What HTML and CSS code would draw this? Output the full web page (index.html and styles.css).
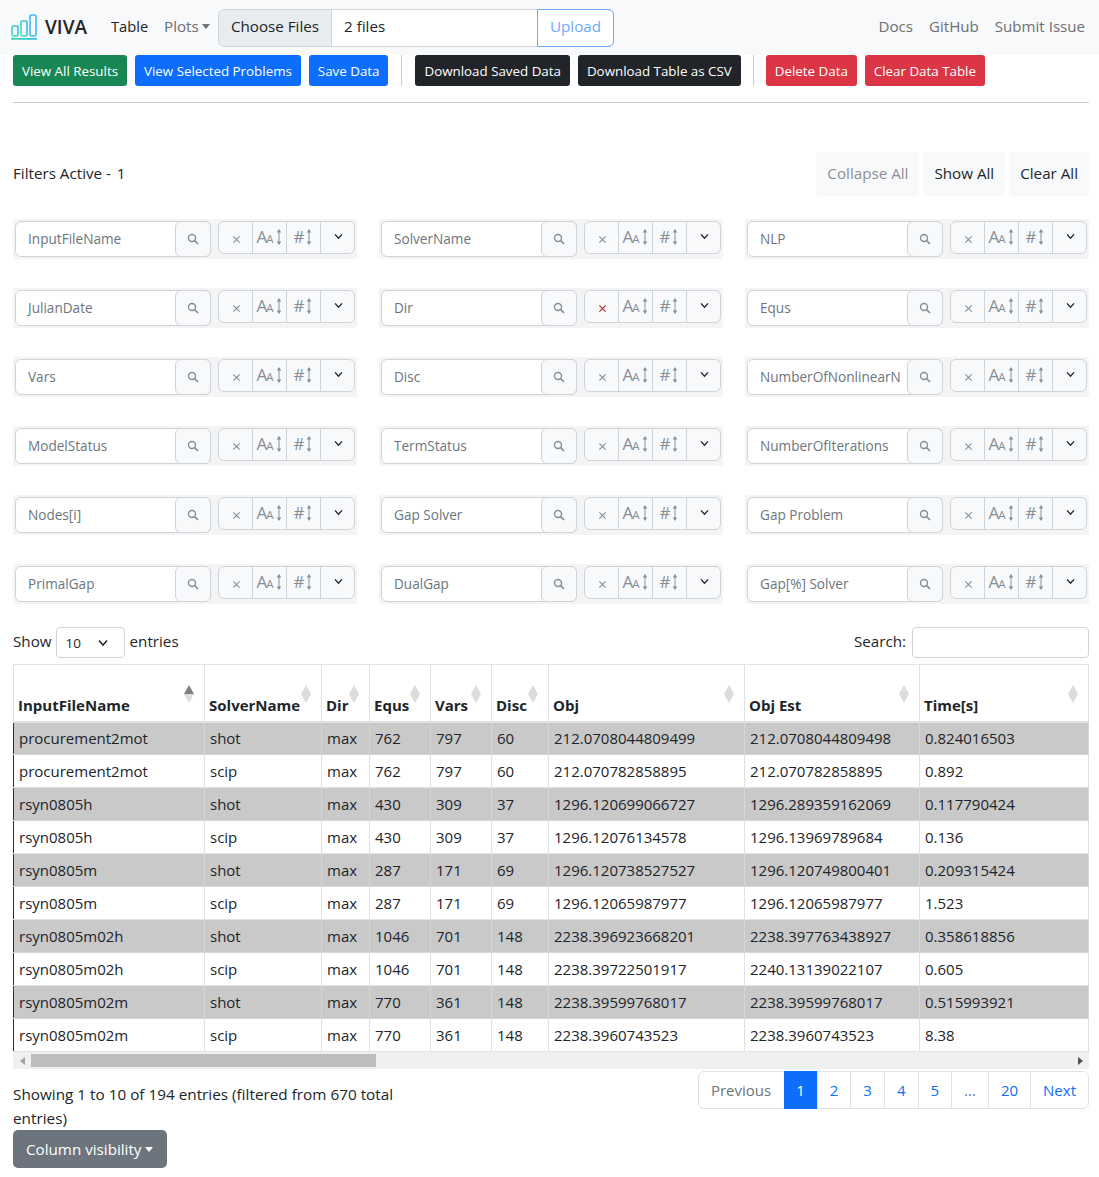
FILE: index.html
```html
<!DOCTYPE html>
<html lang="en">
<head>
    <meta charset="UTF-8">
    <meta name="viewport" content="width=device-width, initial-scale=1.0">
    <title>VIVA</title>
    <link rel="stylesheet" href="styles.css">
</head>
<body>
    <svg class="defs" width="0" height="0">
        <symbol id="i-search" viewBox="0 0 12 12"><circle cx="5" cy="5" r="3.5" fill="none" stroke="currentColor" stroke-width="1.4"/><path d="M7.6 7.6 L11 11" stroke="currentColor" stroke-width="1.7"/></symbol>
        <symbol id="i-x" viewBox="0 0 10 10"><path d="M1.5 1.5 L8.5 8.5 M8.5 1.5 L1.5 8.5" stroke="currentColor" stroke-width="1.2" fill="none"/></symbol>
        <symbol id="i-arrows" viewBox="0 0 8 20"><path d="M4 3 V17" stroke="currentColor" stroke-width="1.1"/><path d="M1.5 5 L4 1 L6.5 5 Z M1.5 15 L4 19 L6.5 15 Z" fill="currentColor"/></symbol>
        <symbol id="i-chev" viewBox="0 0 10 8"><path d="M1 1.5 L5 6 L9 1.5" stroke="currentColor" stroke-width="1.5" fill="none"/></symbol>
    </svg>

    <nav class="navbar">
        <div class="brand">
            <svg class="logo" width="28" height="28" viewBox="0 0 28 28">
                <defs><linearGradient id="lg" x1="0" y1="1" x2="1" y2="0"><stop offset="0" stop-color="#3ee8a8"/><stop offset="1" stop-color="#35b0f5"/></linearGradient></defs>
                <rect x="2" y="13" width="6" height="10" rx="1.5" fill="none" stroke="url(#lg)" stroke-width="1.6"/>
                <rect x="11" y="8" width="6" height="15" rx="1.5" fill="none" stroke="url(#lg)" stroke-width="1.6"/>
                <rect x="20" y="2" width="6" height="21" rx="1.5" fill="none" stroke="#45b5f5" stroke-width="1.6"/>
                <rect x="1" y="25" width="26" height="1.8" fill="url(#lg)"/>
            </svg>
            <span class="brand-name">VIVA</span>
        </div>
        <a class="nav-link nav-active">Table</a>
        <a class="nav-link nav-plots">Plots<span class="caret"></span></a>
        <div class="file-group">
            <span class="file-choose">Choose Files</span>
            <span class="file-name">2 files</span>
            <span class="file-upload">Upload</span>
        </div>
        <div class="nav-right">
            <a class="nav-link">Docs</a>
            <a class="nav-link">GitHub</a>
            <a class="nav-link">Submit Issue</a>
        </div>
    </nav>

    <main class="page">
        <div class="toolbar">
            <button class="btn btn-green">View All Results</button>
            <button class="btn btn-blue">View Selected Problems</button>
            <button class="btn btn-blue">Save Data</button>
            <span class="vr"></span>
            <button class="btn btn-dark">Download Saved Data</button>
            <button class="btn btn-dark">Download Table as CSV</button>
            <span class="vr vr-tight"></span>
            <button class="btn btn-red">Delete Data</button>
            <button class="btn btn-red">Clear Data Table</button>
        </div>
        <hr class="rule">

        <div class="filter-head">
            <div class="filter-count">Filters Active - <span class="count">1</span></div>
            <div class="filter-actions">
                <span class="light-btn light-off">Collapse All</span>
                <span class="light-btn">Show All</span>
                <span class="light-btn">Clear All</span>
            </div>
        </div>

        <div class="filters">
            <div class="filter"><div class="search"><span class="search-input">InputFileName</span><span class="search-btn"><svg width="12" height="12"><use href="#i-search"/></svg></span></div><div class="tools"><span class="tool"><svg width="9" height="9"><use href="#i-x"/></svg></span><span class="tool tool-sort">A<small>A</small><svg width="8" height="18"><use href="#i-arrows"/></svg></span><span class="tool tool-sort">#<svg width="8" height="18"><use href="#i-arrows"/></svg></span><span class="tool tool-chev"><svg width="9" height="7"><use href="#i-chev"/></svg></span></div></div>
            <div class="filter"><div class="search"><span class="search-input">SolverName</span><span class="search-btn"><svg width="12" height="12"><use href="#i-search"/></svg></span></div><div class="tools"><span class="tool"><svg width="9" height="9"><use href="#i-x"/></svg></span><span class="tool tool-sort">A<small>A</small><svg width="8" height="18"><use href="#i-arrows"/></svg></span><span class="tool tool-sort">#<svg width="8" height="18"><use href="#i-arrows"/></svg></span><span class="tool tool-chev"><svg width="9" height="7"><use href="#i-chev"/></svg></span></div></div>
            <div class="filter"><div class="search"><span class="search-input">NLP</span><span class="search-btn"><svg width="12" height="12"><use href="#i-search"/></svg></span></div><div class="tools"><span class="tool"><svg width="9" height="9"><use href="#i-x"/></svg></span><span class="tool tool-sort">A<small>A</small><svg width="8" height="18"><use href="#i-arrows"/></svg></span><span class="tool tool-sort">#<svg width="8" height="18"><use href="#i-arrows"/></svg></span><span class="tool tool-chev"><svg width="9" height="7"><use href="#i-chev"/></svg></span></div></div>
            <div class="filter"><div class="search"><span class="search-input">JulianDate</span><span class="search-btn"><svg width="12" height="12"><use href="#i-search"/></svg></span></div><div class="tools"><span class="tool"><svg width="9" height="9"><use href="#i-x"/></svg></span><span class="tool tool-sort">A<small>A</small><svg width="8" height="18"><use href="#i-arrows"/></svg></span><span class="tool tool-sort">#<svg width="8" height="18"><use href="#i-arrows"/></svg></span><span class="tool tool-chev"><svg width="9" height="7"><use href="#i-chev"/></svg></span></div></div>
            <div class="filter"><div class="search"><span class="search-input">Dir</span><span class="search-btn"><svg width="12" height="12"><use href="#i-search"/></svg></span></div><div class="tools"><span class="tool tool-on"><svg width="9" height="9"><use href="#i-x"/></svg></span><span class="tool tool-sort">A<small>A</small><svg width="8" height="18"><use href="#i-arrows"/></svg></span><span class="tool tool-sort">#<svg width="8" height="18"><use href="#i-arrows"/></svg></span><span class="tool tool-chev"><svg width="9" height="7"><use href="#i-chev"/></svg></span></div></div>
            <div class="filter"><div class="search"><span class="search-input">Equs</span><span class="search-btn"><svg width="12" height="12"><use href="#i-search"/></svg></span></div><div class="tools"><span class="tool"><svg width="9" height="9"><use href="#i-x"/></svg></span><span class="tool tool-sort">A<small>A</small><svg width="8" height="18"><use href="#i-arrows"/></svg></span><span class="tool tool-sort">#<svg width="8" height="18"><use href="#i-arrows"/></svg></span><span class="tool tool-chev"><svg width="9" height="7"><use href="#i-chev"/></svg></span></div></div>
            <div class="filter"><div class="search"><span class="search-input">Vars</span><span class="search-btn"><svg width="12" height="12"><use href="#i-search"/></svg></span></div><div class="tools"><span class="tool"><svg width="9" height="9"><use href="#i-x"/></svg></span><span class="tool tool-sort">A<small>A</small><svg width="8" height="18"><use href="#i-arrows"/></svg></span><span class="tool tool-sort">#<svg width="8" height="18"><use href="#i-arrows"/></svg></span><span class="tool tool-chev"><svg width="9" height="7"><use href="#i-chev"/></svg></span></div></div>
            <div class="filter"><div class="search"><span class="search-input">Disc</span><span class="search-btn"><svg width="12" height="12"><use href="#i-search"/></svg></span></div><div class="tools"><span class="tool"><svg width="9" height="9"><use href="#i-x"/></svg></span><span class="tool tool-sort">A<small>A</small><svg width="8" height="18"><use href="#i-arrows"/></svg></span><span class="tool tool-sort">#<svg width="8" height="18"><use href="#i-arrows"/></svg></span><span class="tool tool-chev"><svg width="9" height="7"><use href="#i-chev"/></svg></span></div></div>
            <div class="filter"><div class="search"><span class="search-input">NumberOfNonlinearN</span><span class="search-btn"><svg width="12" height="12"><use href="#i-search"/></svg></span></div><div class="tools"><span class="tool"><svg width="9" height="9"><use href="#i-x"/></svg></span><span class="tool tool-sort">A<small>A</small><svg width="8" height="18"><use href="#i-arrows"/></svg></span><span class="tool tool-sort">#<svg width="8" height="18"><use href="#i-arrows"/></svg></span><span class="tool tool-chev"><svg width="9" height="7"><use href="#i-chev"/></svg></span></div></div>
            <div class="filter"><div class="search"><span class="search-input">ModelStatus</span><span class="search-btn"><svg width="12" height="12"><use href="#i-search"/></svg></span></div><div class="tools"><span class="tool"><svg width="9" height="9"><use href="#i-x"/></svg></span><span class="tool tool-sort">A<small>A</small><svg width="8" height="18"><use href="#i-arrows"/></svg></span><span class="tool tool-sort">#<svg width="8" height="18"><use href="#i-arrows"/></svg></span><span class="tool tool-chev"><svg width="9" height="7"><use href="#i-chev"/></svg></span></div></div>
            <div class="filter"><div class="search"><span class="search-input">TermStatus</span><span class="search-btn"><svg width="12" height="12"><use href="#i-search"/></svg></span></div><div class="tools"><span class="tool"><svg width="9" height="9"><use href="#i-x"/></svg></span><span class="tool tool-sort">A<small>A</small><svg width="8" height="18"><use href="#i-arrows"/></svg></span><span class="tool tool-sort">#<svg width="8" height="18"><use href="#i-arrows"/></svg></span><span class="tool tool-chev"><svg width="9" height="7"><use href="#i-chev"/></svg></span></div></div>
            <div class="filter"><div class="search"><span class="search-input">NumberOfIterations</span><span class="search-btn"><svg width="12" height="12"><use href="#i-search"/></svg></span></div><div class="tools"><span class="tool"><svg width="9" height="9"><use href="#i-x"/></svg></span><span class="tool tool-sort">A<small>A</small><svg width="8" height="18"><use href="#i-arrows"/></svg></span><span class="tool tool-sort">#<svg width="8" height="18"><use href="#i-arrows"/></svg></span><span class="tool tool-chev"><svg width="9" height="7"><use href="#i-chev"/></svg></span></div></div>
            <div class="filter"><div class="search"><span class="search-input">Nodes[i]</span><span class="search-btn"><svg width="12" height="12"><use href="#i-search"/></svg></span></div><div class="tools"><span class="tool"><svg width="9" height="9"><use href="#i-x"/></svg></span><span class="tool tool-sort">A<small>A</small><svg width="8" height="18"><use href="#i-arrows"/></svg></span><span class="tool tool-sort">#<svg width="8" height="18"><use href="#i-arrows"/></svg></span><span class="tool tool-chev"><svg width="9" height="7"><use href="#i-chev"/></svg></span></div></div>
            <div class="filter"><div class="search"><span class="search-input">Gap Solver</span><span class="search-btn"><svg width="12" height="12"><use href="#i-search"/></svg></span></div><div class="tools"><span class="tool"><svg width="9" height="9"><use href="#i-x"/></svg></span><span class="tool tool-sort">A<small>A</small><svg width="8" height="18"><use href="#i-arrows"/></svg></span><span class="tool tool-sort">#<svg width="8" height="18"><use href="#i-arrows"/></svg></span><span class="tool tool-chev"><svg width="9" height="7"><use href="#i-chev"/></svg></span></div></div>
            <div class="filter"><div class="search"><span class="search-input">Gap Problem</span><span class="search-btn"><svg width="12" height="12"><use href="#i-search"/></svg></span></div><div class="tools"><span class="tool"><svg width="9" height="9"><use href="#i-x"/></svg></span><span class="tool tool-sort">A<small>A</small><svg width="8" height="18"><use href="#i-arrows"/></svg></span><span class="tool tool-sort">#<svg width="8" height="18"><use href="#i-arrows"/></svg></span><span class="tool tool-chev"><svg width="9" height="7"><use href="#i-chev"/></svg></span></div></div>
            <div class="filter"><div class="search"><span class="search-input">PrimalGap</span><span class="search-btn"><svg width="12" height="12"><use href="#i-search"/></svg></span></div><div class="tools"><span class="tool"><svg width="9" height="9"><use href="#i-x"/></svg></span><span class="tool tool-sort">A<small>A</small><svg width="8" height="18"><use href="#i-arrows"/></svg></span><span class="tool tool-sort">#<svg width="8" height="18"><use href="#i-arrows"/></svg></span><span class="tool tool-chev"><svg width="9" height="7"><use href="#i-chev"/></svg></span></div></div>
            <div class="filter"><div class="search"><span class="search-input">DualGap</span><span class="search-btn"><svg width="12" height="12"><use href="#i-search"/></svg></span></div><div class="tools"><span class="tool"><svg width="9" height="9"><use href="#i-x"/></svg></span><span class="tool tool-sort">A<small>A</small><svg width="8" height="18"><use href="#i-arrows"/></svg></span><span class="tool tool-sort">#<svg width="8" height="18"><use href="#i-arrows"/></svg></span><span class="tool tool-chev"><svg width="9" height="7"><use href="#i-chev"/></svg></span></div></div>
            <div class="filter"><div class="search"><span class="search-input">Gap[%] Solver</span><span class="search-btn"><svg width="12" height="12"><use href="#i-search"/></svg></span></div><div class="tools"><span class="tool"><svg width="9" height="9"><use href="#i-x"/></svg></span><span class="tool tool-sort">A<small>A</small><svg width="8" height="18"><use href="#i-arrows"/></svg></span><span class="tool tool-sort">#<svg width="8" height="18"><use href="#i-arrows"/></svg></span><span class="tool tool-chev"><svg width="9" height="7"><use href="#i-chev"/></svg></span></div></div>
        </div>

        <div class="table-head">
            <div class="length"><span class="head-text">Show</span><span class="length-select">10<svg width="12" height="8"><use href="#i-chev"/></svg></span><span class="head-text">entries</span></div>
            <div class="table-search"><span class="head-text">Search:</span><span class="search-box"></span></div>
        </div>

        <table class="results">
            <colgroup>
                <col class="c-file"><col class="c-solver"><col class="c-dir"><col class="c-num"><col class="c-num"><col class="c-disc"><col class="c-obj"><col class="c-est"><col class="c-time">
            </colgroup>
            <thead>
                <tr>
                    <th class="sorted">InputFileName</th><th>SolverName</th><th>Dir</th><th>Equs</th><th>Vars</th><th>Disc</th><th>Obj</th><th>Obj Est</th><th>Time[s]</th>
                </tr>
            </thead>
            <tbody>
                <tr class="odd"><td>procurement2mot</td><td>shot</td><td>max</td><td>762</td><td>797</td><td>60</td><td>212.0708044809499</td><td>212.0708044809498</td><td>0.824016503</td></tr>
                <tr><td>procurement2mot</td><td>scip</td><td>max</td><td>762</td><td>797</td><td>60</td><td>212.070782858895</td><td>212.070782858895</td><td>0.892</td></tr>
                <tr class="odd"><td>rsyn0805h</td><td>shot</td><td>max</td><td>430</td><td>309</td><td>37</td><td>1296.120699066727</td><td>1296.289359162069</td><td>0.117790424</td></tr>
                <tr><td>rsyn0805h</td><td>scip</td><td>max</td><td>430</td><td>309</td><td>37</td><td>1296.12076134578</td><td>1296.13969789684</td><td>0.136</td></tr>
                <tr class="odd"><td>rsyn0805m</td><td>shot</td><td>max</td><td>287</td><td>171</td><td>69</td><td>1296.120738527527</td><td>1296.120749800401</td><td>0.209315424</td></tr>
                <tr><td>rsyn0805m</td><td>scip</td><td>max</td><td>287</td><td>171</td><td>69</td><td>1296.12065987977</td><td>1296.12065987977</td><td>1.523</td></tr>
                <tr class="odd"><td>rsyn0805m02h</td><td>shot</td><td>max</td><td>1046</td><td>701</td><td>148</td><td>2238.396923668201</td><td>2238.397763438927</td><td>0.358618856</td></tr>
                <tr><td>rsyn0805m02h</td><td>scip</td><td>max</td><td>1046</td><td>701</td><td>148</td><td>2238.39722501917</td><td>2240.13139022107</td><td>0.605</td></tr>
                <tr class="odd"><td>rsyn0805m02m</td><td>shot</td><td>max</td><td>770</td><td>361</td><td>148</td><td>2238.39599768017</td><td>2238.39599768017</td><td>0.515993921</td></tr>
                <tr><td>rsyn0805m02m</td><td>scip</td><td>max</td><td>770</td><td>361</td><td>148</td><td>2238.3960743523</td><td>2238.3960743523</td><td>8.38</td></tr>
            </tbody>
        </table>
        <div class="scrollbar">
            <span class="arrow-left"></span>
            <span class="thumb"></span>
            <span class="arrow-right"></span>
        </div>

        <div class="table-foot">
            <div class="info">Showing 1 to 10 of 194 entries (filtered from 670 total entries)</div>
            <div class="pager">
                <span class="page-item page-off">Previous</span>
                <span class="page-item page-on">1</span>
                <span class="page-item">2</span>
                <span class="page-item">3</span>
                <span class="page-item">4</span>
                <span class="page-item">5</span>
                <span class="page-item page-off">...</span>
                <span class="page-item">20</span>
                <span class="page-item">Next</span>
            </div>
        </div>
        <button class="btn-columns">Column visibility<span class="caret"></span></button>
    </main>
</body>
</html>
```

FILE: styles.css
```css
* {
    box-sizing: border-box;
}
body {
    margin: 0;
    font-family: "Open Sans", "Noto Sans", Arial, sans-serif;
    font-size: 15.2px;
    line-height: 24px;
    color: #212529;
    background-color: #fff;
}
.defs {
    position: absolute;
}

/* navbar */
.navbar {
    display: flex;
    align-items: center;
    height: 55px;
    padding: 0 14px 0 10px;
    background-color: #f8f9fa;
}
.brand {
    display: flex;
    align-items: center;
    width: 101px;
    margin-top: -1px;
}
.logo {
    margin-right: 7px;
}
.brand-name {
    font-size: 19px;
    font-weight: 600;
}
.nav-link {
    margin-bottom: 4px;
    color: #6c6f73;
}
.nav-right .nav-link {
    margin-bottom: 0;
}
.nav-active {
    width: 53px;
    font-size: 14.7px;
    color: #212529;
}
.nav-plots {
    width: 54px;
}
.caret {
    display: inline-block;
    margin-left: 3px;
    vertical-align: 3px;
    border-top: 5px solid;
    border-left: 4.5px solid transparent;
    border-right: 4.5px solid transparent;
}
.file-group {
    display: flex;
    width: 396px;
    height: 38px;
    line-height: 33px;
    border: 1px solid #ced4da;
    border-radius: 6px;
}
.file-choose {
    width: 113px;
    text-align: center;
    background-color: #e9ecef;
    border-right: 1px solid #ced4da;
    border-radius: 5px 0 0 5px;
}
.file-name {
    flex: 1;
    padding-left: 12px;
    background-color: #fff;
}
.file-upload {
    width: 77px;
    margin: -1px;
    line-height: 33px;
    text-align: center;
    color: #6ea8fe;
    background-color: #fff;
    border: 1px solid #6ea8fe;
    border-radius: 0 6px 6px 0;
}
.nav-right {
    display: flex;
    gap: 16px;
    margin-left: auto;
    margin-bottom: 4px;
    font-size: 15.1px;
}

/* toolbar */
.page {
    padding: 0 10px 0 13px;
}
.toolbar {
    display: flex;
    gap: 8px;
}
.btn {
    height: 31px;
    padding: 0 9px;
    font-family: inherit;
    font-size: 13.35px;
    color: #fff;
    border: none;
    border-radius: 3px;
}
.btn-green {
    background-color: #198754;
}
.btn-blue {
    background-color: #0d6efd;
}
.btn-dark {
    background-color: #212529;
}
.btn-red {
    background-color: #dc3545;
}
.vr {
    width: 1px;
    margin: 0 5px;
    background-color: #ccc;
}
.vr-tight {
    margin: 0 4px;
}
.rule {
    height: 1px;
    margin: 16px 0 0;
    border: none;
    background-color: #c9c9c9;
}

/* filters */
.filter-head {
    display: flex;
    justify-content: space-between;
    align-items: center;
    margin-top: 49px;
    height: 44px;
}
.filter-count {
    margin-bottom: 2px;
}
.count {
    margin-left: 2px;
}
.filter-actions {
    display: flex;
    gap: 4px;
}
.light-btn {
    height: 44px;
    padding: 0 11px;
    line-height: 42px;
    background-color: #f8f9fa;
    border-radius: 4px;
}
.light-off {
    color: #8b9096;
}
.filters {
    display: grid;
    grid-template-columns: repeat(3, 344px);
    column-gap: 22px;
    row-gap: 29px;
    margin-top: 23px;
}
.filter {
    display: flex;
    justify-content: space-between;
    height: 40px;
    padding: 2px;
    background-color: #f4f4f4;
    border-radius: 2px;
}
.search {
    display: flex;
    width: 196px;
    height: 36px;
    line-height: 34px;
    font-size: 13.6px;
    background-color: #fff;
    border: 1px solid #ced4da;
    border-radius: 6px;
}
.search-input {
    flex: 1;
    padding-left: 12px;
    color: #6c757d;
    white-space: nowrap;
    overflow: hidden;
}
.search-btn {
    display: flex;
    align-items: center;
    justify-content: center;
    width: 36px;
    margin: -1px;
    color: #868e96;
    background-color: #f8f9fa;
    border: 1px solid #ced4da;
    border-radius: 6px;
}
.tools {
    display: flex;
    width: 137px;
    height: 33px;
    background-color: #f8f9fa;
    border: 1px solid #ced4da;
    border-radius: 6px;
}
.tool {
    display: flex;
    flex: 1 1 0;
    align-items: center;
    justify-content: center;
    color: #868e96;
    border-left: 1px solid #ced4da;
}
.tool:first-child {
    border-left: none;
}
.tool svg {
    margin-top: 3px;
}
.tool:first-child svg {
    margin-left: 2px;
}
.tool-sort {
    display: block;
    line-height: 30px;
    text-align: center;
    font-size: 17px;
    letter-spacing: -1px;
}
.tool-sort small {
    font-size: 11.5px;
}
.tool-sort svg {
    margin-top: 0;
    margin-left: 2px;
    vertical-align: -3px;
}
.tool-chev {
    color: #212529;
}
.tool-chev svg {
    margin-top: -3px;
    margin-left: 1px;
}
.tool-on {
    color: #c01f1f;
}

/* table */
.table-head {
    display: flex;
    justify-content: space-between;
    height: 31px;
    margin-top: 23px;
}
.length,
.table-search {
    display: flex;
    align-items: center;
}
.head-text {
    margin-bottom: 3px;
}
.length-select {
    display: flex;
    align-items: center;
    justify-content: space-between;
    width: 69px;
    height: 31px;
    margin: 0 5px 0 4px;
    padding: 0 15px 0 9px;
    font-size: 13.5px;
    border: 1px solid #ced4da;
    border-radius: 4px;
}
.table-search {
    gap: 6px;
}
.search-box {
    width: 177px;
    height: 31px;
    border: 1px solid #ced4da;
    border-radius: 4px;
}
.results {
    width: 1076px;
    margin-top: 6px;
    border-collapse: collapse;
    table-layout: fixed;
    white-space: nowrap;
    font-size: 15px;
}
.c-file {
    width: 191px;
}
.c-solver {
    width: 117px;
}
.c-dir {
    width: 48px;
}
.c-num {
    width: 61px;
}
.c-disc {
    width: 57px;
}
.c-obj {
    width: 196px;
}
.c-est {
    width: 175px;
}
.c-time {
    width: 169px;
}
.results th {
    position: relative;
    height: 57px;
    padding: 0 4px 4px;
    text-align: left;
    vertical-align: bottom;
    font-weight: 700;
    border: 1px solid #dee2e6;
    border-bottom-width: 2px;
}
.results th::after {
    content: "";
    position: absolute;
    top: 20px;
    right: 10px;
    width: 10px;
    height: 18px;
    background-color: #dcdcdc;
    clip-path: polygon(50% 0, 100% 50%, 50% 100%, 0 50%);
}
.results th.sorted::after {
    top: 20px;
    height: 9px;
    background-color: #808080;
    clip-path: polygon(50% 0, 100% 100%, 0 100%);
}
.results th.sorted::before {
    content: "";
    position: absolute;
    top: 29px;
    right: 10px;
    width: 10px;
    height: 9px;
    background-color: #dcdcdc;
    clip-path: polygon(0 0, 100% 0, 50% 100%);
}
.results td {
    height: 33px;
    padding: 0 5px;
    border: 1px solid #dee2e6;
}
.results tr.odd td {
    background-color: #c9c9c9;
    border-color: #d6d6d6;
}
.results tbody td:first-child {
    border-left: 1px solid #333;
}
.scrollbar {
    display: flex;
    align-items: center;
    height: 17px;
    background-color: #f0f0f0;
}
.arrow-left {
    margin-left: 7px;
    border-right: 5px solid #a3a3a3;
    border-top: 4px solid transparent;
    border-bottom: 4px solid transparent;
}
.thumb {
    width: 345px;
    height: 13px;
    margin-left: 6px;
    background-color: #bdbdbd;
}
.arrow-right {
    margin-left: auto;
    margin-right: 6px;
    border-left: 5px solid #505050;
    border-top: 4px solid transparent;
    border-bottom: 4px solid transparent;
}
.table-foot {
    display: flex;
    justify-content: space-between;
    margin-top: 2px;
}
.info {
    width: 400px;
    padding-top: 11px;
    font-size: 15.3px;
}
.pager {
    display: flex;
    height: 38px;
    border: 1px solid #dee2e6;
    border-radius: 6px;
}
.page-item {
    padding: 0 12px;
    line-height: 36px;
    font-size: 15px;
    color: #0d6efd;
    border-left: 1px solid #dee2e6;
}
.page-item:first-child {
    padding-right: 13px;
    border-left: none;
}
.page-off {
    color: #6c757d;
}
.page-on {
    margin: -1px 0;
    line-height: 38px;
    color: #fff;
    background-color: #0d6efd;
    border-left: none;
}
.btn-columns {
    display: block;
    height: 38px;
    padding: 0 14px 0 13px;
    font-family: inherit;
    font-size: 15.2px;
    color: #fff;
    background-color: #6c757d;
    border: none;
    border-radius: 5px;
}
.btn-columns .caret {
    margin-left: 4px;
}
```
